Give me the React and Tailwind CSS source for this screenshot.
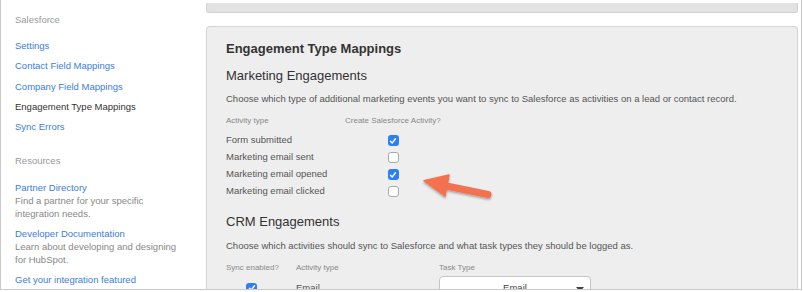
import React from 'react'

function Check({ on }) {
  return on ? (
    <span className="inline-flex h-[11px] w-[11px] items-center justify-center rounded-[3px] bg-[#2d7ff6]">
      <svg width="8" height="8" viewBox="0 0 8 8">
        <path d="M1.5 4.2 L3.2 6 L6.5 1.8" fill="none" stroke="#fff" strokeWidth="1.4" strokeLinecap="round" strokeLinejoin="round" />
      </svg>
    </span>
  ) : (
    <span className="inline-block h-[11px] w-[11px] rounded-[3px] border border-[#a9a9a9] bg-white" />
  )
}

const nav = [
  { label: 'Settings', link: true },
  { label: 'Contact Field Mappings', link: true },
  { label: 'Company Field Mappings', link: true },
  { label: 'Engagement Type Mappings', link: false },
  { label: 'Sync Errors', link: true },
]

const resources = [
  { title: 'Partner Directory', desc: ['Find a partner for your specific', 'integration needs.'] },
  { title: 'Developer Documentation', desc: ['Learn about developing and designing', 'for HubSpot.'] },
  { title: 'Get your integration featured', desc: [] },
]

const marketing = [
  { label: 'Form submitted', on: true },
  { label: 'Marketing email sent', on: false },
  { label: 'Marketing email opened', on: true },
  { label: 'Marketing email clicked', on: false },
]

export default function App() {
  return (
    <div className="relative h-[292px] w-[803px] overflow-hidden bg-white font-['Liberation_Sans',Arial,sans-serif]">
      <div className="flex h-[290px] w-[802px] border-b border-l border-r border-[#c9c9c9]">
        {/* sidebar */}
        <div className="w-[205px] shrink-0 pl-[14px] pt-[10px] text-[9.5px]">
          <div className="leading-[20px] text-[#999]">Salesforce</div>
          <div className="mt-[6px]">
            {nav.map(n => (
              <div key={n.label} className={`leading-[20.3px] ${n.link ? 'text-[#3b7ddb]' : 'text-[#333]'}`}>{n.label}</div>
            ))}
          </div>
          <div className="mt-[14px] leading-[20px] text-[#999]">Resources</div>
          <div className="mt-[10px]">
            {resources.map(r => (
              <div key={r.title} className="mt-[7px] leading-[13px]">
                <div className="text-[#3b7ddb]">{r.title}</div>
                {r.desc.map(d => <div key={d} className="text-[#888]">{d}</div>)}
              </div>
            ))}
          </div>
        </div>

        {/* main column */}
        <div className="flex w-[592px] flex-col pt-[3px]">
          <div className="h-[10px] rounded-b-[3px] border border-t-0 border-[#d2d2d2] bg-[#e2e2e2]" />
          <div className="mt-[13px] flex-1 overflow-hidden rounded-t-[4px] border border-b-0 border-[#d4d4d4] bg-[#eeeeee] pl-[19px] pt-[13px] text-[#444]">
            <h1 className="text-[13px] font-bold leading-[18px] text-[#333]">Engagement Type Mappings</h1>
            <h2 className="mt-[8px] text-[13px] leading-[20px] text-[#333]">Marketing Engagements</h2>
            <p className="mt-[6px] text-[9.5px] leading-[14px] text-[#555]">Choose which type of additional marketing events you want to sync to Salesforce as activities on a lead or contact record.</p>
            <div className="mt-[8px] flex h-[14px] items-center text-[8px] text-[#888]">
              <span className="w-[119px]">Activity type</span>
              <span>Create Salesforce Activity?</span>
            </div>
            <div className="mt-[4px]">
              {marketing.map(m => (
                <div key={m.label} className="flex h-[17px] items-center text-[9.5px] text-[#555]">
                  <span className="w-[119px]">{m.label}</span>
                  <span className="flex w-[96px] justify-center"><Check on={m.on} /></span>
                </div>
              ))}
            </div>
            <h2 className="mt-[12px] text-[13px] leading-[20px] text-[#333]">CRM Engagements</h2>
            <p className="mt-[7px] text-[9.5px] leading-[14px] text-[#555]">Choose which activities should sync to Salesforce and what task types they should be logged as.</p>
            <div className="mt-[8px] flex h-[14px] items-center text-[8px] text-[#888]">
              <span className="w-[70px]">Sync enabled?</span>
              <span className="w-[143px]">Activity type</span>
              <span>Task Type</span>
            </div>
            <div className="mt-[1px] flex items-center text-[9.5px] text-[#555]">
              <span className="flex w-[51px] justify-center"><Check on /></span>
              <span className="ml-[19px] w-[143px]">Email</span>
              <div className="relative flex h-[24px] w-[152px] items-center justify-center rounded-[4px] border border-[#c4c4c4] bg-white text-[#444]">
                Email
                <span className="absolute right-[6px] top-[10px] h-0 w-0 border-l-[4px] border-r-[4px] border-t-[5px] border-l-transparent border-r-transparent border-t-[#444]" />
              </div>
            </div>
          </div>
        </div>
      </div>

      {/* annotation arrow */}
      <svg className="absolute left-[415px] top-[165px]" width="85" height="42" viewBox="0 0 85 42">
        <defs>
          <filter id="sh" x="-20%" y="-20%" width="140%" height="160%">
            <feDropShadow dx="0" dy="1.5" stdDeviation="1.3" floodColor="#000" floodOpacity="0.35" />
          </filter>
        </defs>
        <g filter="url(#sh)">
          <line x1="29" y1="20.5" x2="73" y2="29.5" stroke="#f4714f" strokeWidth="7" strokeLinecap="round" />
          <path d="M9 15.7 L34 10 L30 31 Z" fill="#f4714f" stroke="#f4714f" strokeWidth="1.5" strokeLinejoin="round" />
        </g>
      </svg>
    </div>
  )
}
